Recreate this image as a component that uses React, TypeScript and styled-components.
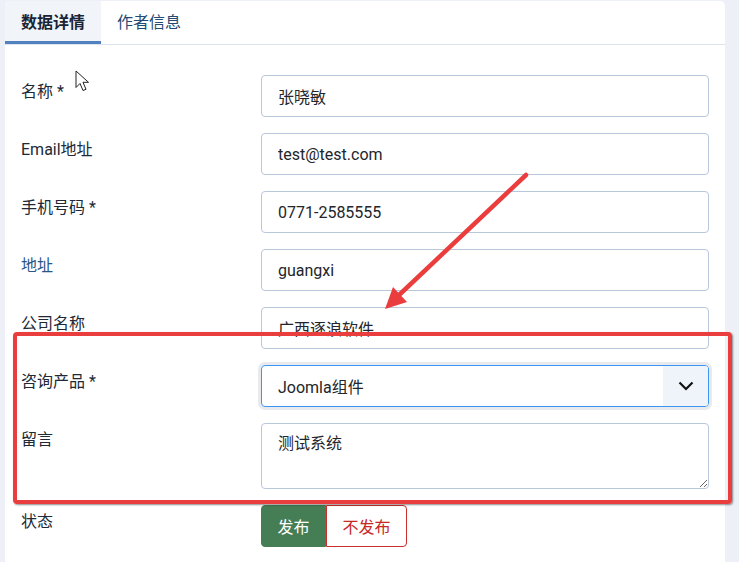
import React from 'react';
import styled, { createGlobalStyle } from 'styled-components';

const GlobalStyle = createGlobalStyle`
  html, body {
    margin: 0;
    padding: 0;
    background: #edf1f7;
  }
  body {
    font-family: Roboto, "Noto Sans CJK SC", sans-serif;
    font-size: 16px;
    color: #22262a;
  }
`;

const Page = styled.div`
  position: relative;
  width: 739px;
  height: 562px;
  overflow: hidden;
  padding: 1px 14px 0 5px;
  box-sizing: border-box;
`;

const Card = styled.section`
  background: #fff;
  border-radius: 0 5px 0 0;
  min-height: 620px;
`;

const TabBar = styled.nav`
  display: flex;
  height: 44px;
  box-sizing: border-box;
  border-bottom: 1px solid #dde4ee;
`;

const Tab = styled.div<{ $active?: boolean }>`
  display: flex;
  align-items: center;
  height: 43px;
  box-sizing: border-box;
  padding: 0 16px;
  border-bottom: 3px solid ${(p) => (p.$active ? '#5181bf' : 'transparent')};
  background: ${(p) => (p.$active ? '#f1f5f9' : 'transparent')};
  color: ${(p) => (p.$active ? '#1a2535' : '#234a72')};
  font-weight: ${(p) => (p.$active ? 700 : 400)};
  font-size: 16px;
`;

const Form = styled.form`
  padding: 30px 16px 0;
`;

const Row = styled.div`
  display: grid;
  grid-template-columns: 240px 1fr;
  margin-bottom: 16px;
`;

const Label = styled.label<{ $tone?: string }>`
  padding-top: 5px;
  line-height: 24px;
  color: ${(p) => p.$tone || '#212936'};
`;

const TextInput = styled.input`
  width: 100%;
  height: 42px;
  box-sizing: border-box;
  border: 1px solid #b9c7db;
  border-radius: 4px;
  padding: 0 16px;
  font: inherit;
  color: #22262a;
  background: #fff;
  outline: none;
`;

const TextArea = styled.textarea`
  display: block;
  width: 100%;
  height: 66px;
  box-sizing: border-box;
  border: 1px solid #b9c7db;
  border-radius: 4px;
  padding: 8px 16px 4px;
  font: inherit;
  line-height: 24px;
  color: #22262a;
  resize: vertical;
  outline: none;
`;

const SelectBox = styled.div`
  display: flex;
  height: 42px;
  box-sizing: border-box;
  border: 1px solid #3a95f5;
  border-radius: 4px;
  box-shadow: 0 0 0 3px #e9eaed;
  overflow: hidden;
`;

const SelectValue = styled.span`
  flex: 1;
  display: flex;
  align-items: center;
  padding: 0 16px;
  color: #22262a;
`;

const Chevron = styled.span`
  display: flex;
  align-items: center;
  justify-content: center;
  width: 45px;
  background: #eff3fa;
`;

const ButtonGroup = styled.div`
  display: flex;
`;

const Toggle = styled.button<{ $on?: boolean }>`
  height: 42px;
  padding: 0 15.5px;
  font: inherit;
  cursor: pointer;
  border: 1px solid ${(p) => (p.$on ? '#457d54' : '#c9302c')};
  background: ${(p) => (p.$on ? '#457d54' : '#fff')};
  color: ${(p) => (p.$on ? '#fff' : '#c62828')};
  border-radius: ${(p) => (p.$on ? '4px 0 0 4px' : '0 4px 4px 0')};
`;

const HighlightBox = styled.div`
  position: absolute;
  left: 13px;
  top: 332px;
  width: 719px;
  height: 172px;
  box-sizing: border-box;
  border: 4px solid #ea3d3d;
  border-radius: 4px;
  box-shadow: 1px 1px 2px rgba(0, 0, 0, 0.45);
  pointer-events: none;
`;

const Overlay = styled.svg`
  position: absolute;
  left: 0;
  top: 0;
  pointer-events: none;
`;

const fields = [
  { label: '名称 *', value: '张晓敏' },
  { label: 'Email地址', value: 'test@test.com' },
  { label: '手机号码 *', value: '0771-2585555' },
  { label: '地址', value: 'guangxi', tone: '#2b5586' },
  { label: '公司名称', value: '广西逐浪软件' },
];

const App: React.FC = () => {
  return (
    <Page>
      <GlobalStyle />
      <Card>
        <TabBar>
          <Tab $active>数据详情</Tab>
          <Tab>作者信息</Tab>
        </TabBar>
        <Form onSubmit={(e) => e.preventDefault()}>
          {fields.map((f) => (
            <Row key={f.label}>
              <Label $tone={f.tone}>{f.label}</Label>
              <TextInput readOnly value={f.value} />
            </Row>
          ))}
          <Row>
            <Label>咨询产品 *</Label>
            <SelectBox>
              <SelectValue>Joomla组件</SelectValue>
              <Chevron>
                <svg width="16" height="10" viewBox="0 0 16 10">
                  <path d="M1.5 1.5 L8 8 L14.5 1.5" fill="none" stroke="#111" strokeWidth="2.2" />
                </svg>
              </Chevron>
            </SelectBox>
          </Row>
          <Row>
            <Label>留言</Label>
            <TextArea readOnly value="测试系统" />
          </Row>
          <Row>
            <Label>状态</Label>
            <ButtonGroup>
              <Toggle type="button" $on>发布</Toggle>
              <Toggle type="button">不发布</Toggle>
            </ButtonGroup>
          </Row>
        </Form>
      </Card>

      <HighlightBox />
      <Overlay width="739" height="562" viewBox="0 0 739 562">
        <line x1="526" y1="175" x2="398" y2="296" stroke="#ea3d3d" strokeWidth="4.5" strokeLinecap="round" />
        <polygon points="385,309 393,287 407,302" fill="#ea3d3d" />
        <path
          d="M76 71 L76 87.5 L80 83.5 L83 90.5 L86 89.3 L83 82.3 L88.5 82.3 Z"
          fill="#fff"
          stroke="#222"
          strokeWidth="1"
          strokeLinejoin="round"
        />
      </Overlay>
    </Page>
  );
};

export default App;
